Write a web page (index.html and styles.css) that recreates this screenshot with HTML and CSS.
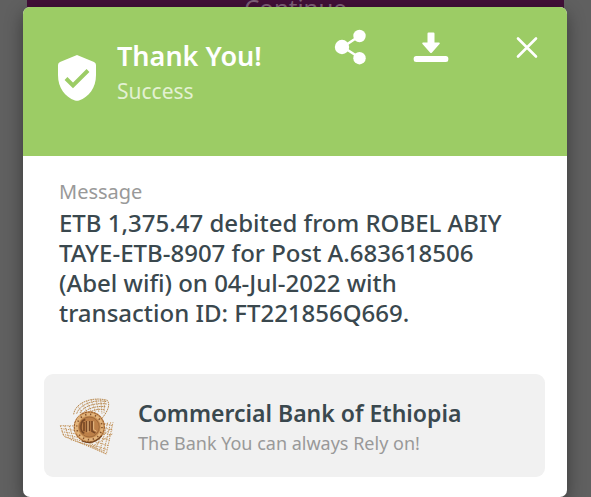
FILE: index.html
```html
<!DOCTYPE html>
<html lang="en">
<head>
<meta charset="utf-8">
<meta name="viewport" content="width=device-width, initial-scale=1">
<title>Thank You!</title>
<link rel="stylesheet" href="styles.css">
</head>
<body>
<div class="page">
  <button class="continue" type="button" tabindex="-1">Continue</button>
</div>
<main class="dialog" role="dialog" aria-labelledby="title">
  <header class="head">
    <svg class="shield" viewBox="0 0 38 46" aria-hidden="true">
      <path fill="#fff" d="M19 0 L36 7 Q38 8 38 10 V20 C38 33 31 42 21 45.500 Q19 46.200 17 45.500 C7 42 0 33 0 20 V10 Q0 8 2 7Z"/>
      <path d="M8 23.500 L15 30.500 L30 15.500" fill="none" stroke="#9ccc65" stroke-width="4"/>
    </svg>
    <div class="titles">
      <h1 id="title">Thank You!</h1>
      <p>Success</p>
    </div>
    <div class="actions">
      <button type="button" aria-label="Share">
        <svg width="36" height="36" viewBox="0 0 36 36" fill="#fff">
          <path d="M27 6.500 L10 18 L27 29" fill="none" stroke="#fff" stroke-width="2.500"/>
          <circle cx="9" cy="18" r="7.200"/><circle cx="26.500" cy="7" r="6.200"/><circle cx="26.500" cy="29.200" r="6.200"/>
        </svg>
      </button>
      <button type="button" aria-label="Download">
        <svg width="36" height="36" viewBox="0 0 36 36" fill="#fff">
          <path d="M15.500 3.500 H20.500 Q21.500 3.500 21.500 4.500 V13.500 H26 Q27.500 13.700 26.500 15 L19 23.500 Q18 24.500 17 23.500 L9.500 15 Q8.500 13.700 10 13.500 H14.500 V4.500 Q14.500 3.500 15.500 3.500Z"/>
          <rect x="0.700" y="27" width="34.600" height="6" rx="2.500"/>
        </svg>
      </button>
      <button class="close" type="button" aria-label="Close">
        <svg width="36" height="36" viewBox="0 0 36 36" fill="none" stroke="#fff" stroke-width="2.600" stroke-linecap="round">
          <path d="M9 9.500 L27 27.500 M27 9.500 L9 27.500"/>
        </svg>
      </button>
    </div>
  </header>
  <section class="message">
    <h2>Message</h2>
    <p>ETB 1,375.47 debited from ROBEL ABIY TAYE-ETB-8907 for Post A.683618506 (Abel wifi) on 04-Jul-2022 with transaction ID: FT221856Q669.</p>
  </section>
  <section class="bank">
    <svg class="logo" viewBox="0 0 180 180" aria-hidden="true" fill="none">
      <g stroke="#b98a50" stroke-width="3" stroke-dasharray="5 2">
        <path d="M47 52 C52 15 105 -2 148 10 C158 24 148 44 132 64"/>
        <path d="M56 50 C65 22 108 6 145 14"/>
        <path d="M66 48 C76 28 110 16 146 21"/>
        <path d="M78 46 C90 34 116 26 144 29"/>
        <path d="M95 46 C108 38 124 35 139 38"/>
        <path d="M60 28 L73 48 M72 19 L86 44 M86 12 L99 43 M100 8 L112 44 M114 6 L123 47 M128 7 L132 51 M140 9 L138 48" stroke-width="2"/>
      </g>
      <g stroke="#c3935a" stroke-width="3" stroke-dasharray="4 3">
        <path d="M7 86 L55 87 M9 95 L60 101 M11 104 L70 113 M14 112 L84 126 M22 120 L98 138 M38 128 L117 151 M63 136 L142 163 M96 146 L145 171"/>
        <path d="M7 86 L18 118 L72 140 L145 171 L165 76"/>
        <path d="M20 86 L32 120 M34 87 L46 126 M132 78 L164 86 M132 91 L163 99 M126 105 L160 114 M118 120 L156 130 M106 133 L152 146 M95 140 L148 158"/>
        <path d="M158 76 L137 165 M149 77 L126 159 M140 80 L115 154 M163 111 L105 147 M160 95 L100 140"/>
      </g>
      <circle cx="94" cy="90" r="47" fill="#c98e52"/>
      <circle cx="94" cy="90" r="45" stroke="#8b552b" stroke-width="3" stroke-dasharray="5 4"/>
      <circle cx="94" cy="90" r="38" stroke="#e2b47c" stroke-width="8"/>
      <circle cx="94" cy="90" r="38" stroke="#85522c" stroke-width="5" stroke-dasharray="4 11"/>
      <circle cx="94" cy="90" r="30" fill="#bd8048" stroke="#8d5a32" stroke-width="2"/>
      <path d="M82 68 C66 70 64 104 79 109 M78 75 V103 M86 72 V105 M94 72 V102 M102 72 V103 L112 108" stroke="#784825" stroke-width="5"/>
      <path d="M90 72 V106 M107 73 V98 L116 103" stroke="#e7bc86" stroke-width="3"/>
      <path d="M67 53 Q47 75 54 111" stroke="#e7bb82" stroke-width="3"/>
      <path d="M72 132 Q105 147 131 116" stroke="#754622" stroke-width="4"/>
    </svg>
    <div>
      <h2>Commercial Bank of Ethiopia</h2>
      <p>The Bank You can always Rely on!</p>
    </div>
  </section>
</main>
</body>
</html>
```
FILE: styles.css
```css
* { box-sizing: border-box; }
body {
  margin: 0;
  background: #606060;
  font-family: "Noto Sans", "Open Sans", sans-serif;
  color: #3a484e;
}
h1, h2, p { margin: 0; }
button {
  border: 0;
  padding: 0;
  background: none;
  font: inherit;
}
svg { display: block; flex: none; }
.page {
  height: 7px;
  padding: 0 27px;
}
.continue {
  display: block;
  width: 100%;
  height: 16px;
  background: #420f38;
  color: #80607a;
  font-size: 24px;
  line-height: 16px;
}
.dialog {
  position: relative;
  margin: 0 24px 0 23px;
  padding-bottom: 20px;
  border-radius: 7px;
  background: #fff;
  box-shadow: 0 6px 18px rgba(0, 0, 0, 0.4);
}
.head {
  display: flex;
  align-items: flex-start;
  height: 149px;
  padding: 22px 22px 0 35px;
  border-radius: 7px 7px 0 0;
  background: #9ccc65;
  color: #fff;
}
.shield {
  width: 38px;
  height: 46px;
  margin-top: 26px;
}
.titles { margin: 8px 0 0 21px; }
h1 {
  font-size: 27px;
  font-weight: 600;
  line-height: 38px;
}
.titles p {
  color: #e3f1d3;
  font-size: 21px;
  line-height: 32px;
}
.actions {
  display: flex;
  gap: 44px;
  margin-left: auto;
}
.close { margin-left: 16px; }
.message { padding: 20px 36px 0; }
.message h2 {
  color: #999;
  font-size: 20px;
  font-weight: 400;
  line-height: 32px;
}
.message p {
  font-size: 24px;
  font-weight: 500;
  line-height: 30px;
}
.bank {
  display: flex;
  align-items: center;
  height: 103px;
  margin: 46px 22px 0 21px;
  padding: 2px 14px 0;
  border-radius: 9px;
  background: #f1f1f1;
}
.logo {
  width: 60px;
  height: 60px;
  margin-right: 20px;
}
.bank h2 {
  font-size: 23px;
  font-weight: 600;
  line-height: 32px;
}
.bank p {
  color: #999;
  font-size: 18px;
  line-height: 28px;
}
```
